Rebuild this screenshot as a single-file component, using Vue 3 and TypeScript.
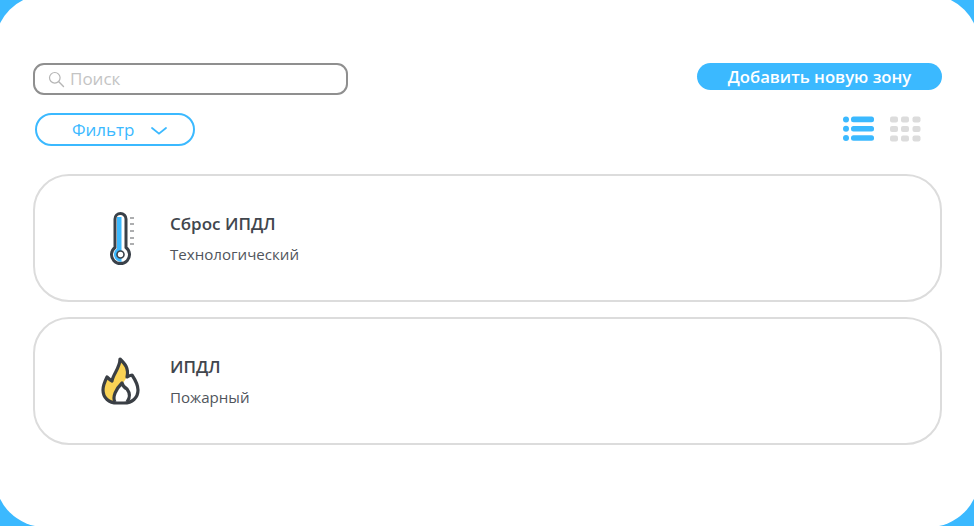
<script setup lang="ts">
interface Zone {
  id: number;
  name: string;
  kind: string;
  icon: "thermo" | "fire";
}

const zones: Zone[] = [
  { id: 1, name: "Сброс ИПДЛ", kind: "Технологический", icon: "thermo" },
  { id: 2, name: "ИПДЛ", kind: "Пожарный", icon: "fire" },
];

const ticks = [8, 14, 21, 28, 34];
const listRows = [3.4, 12.7, 22];
const gridCols = [0, 11, 22.5];
const gridRows = [0.5, 10, 19.5];
</script>

<template>
  <div class="page">
    <div class="panel">
      <div class="toolbar">
        <div class="toolbar-left">
          <label class="search">
            <svg width="17" height="17" viewBox="0 0 17 17">
              <circle cx="6.8" cy="6.8" r="5.3" fill="none" stroke="#b5b5b5" stroke-width="1.2" />
              <path d="M10.8 10.8L15.5 15.5" stroke="#b5b5b5" stroke-width="1.4" stroke-linecap="round" />
            </svg>
            <span class="search-placeholder">Поиск</span>
          </label>
          <button class="filter">
            <span>Фильтр</span>
            <svg class="chevron" width="16" height="8" viewBox="0 0 16 8">
              <path d="M1 1L8 6.6L15 1" fill="none" stroke="#3bb9ff" stroke-width="1.8" stroke-linecap="round" />
            </svg>
          </button>
        </div>
        <div class="toolbar-right">
          <button class="add">Добавить новую зону</button>
          <div class="views">
            <svg width="31" height="26" viewBox="0 0 31 26">
              <g v-for="y in listRows" :key="y" fill="#3bb9ff">
                <circle cx="3" :cy="y" r="3" />
                <rect x="8" :y="y - 2.8" width="23" height="5.6" rx="2.5" />
              </g>
            </svg>
            <svg width="31" height="26" viewBox="0 0 31 26">
              <g v-for="x in gridCols" :key="x" fill="#dcdcdc">
                <rect v-for="y in gridRows" :key="y" :x="x" :y="y" width="8" height="6" rx="2" />
              </g>
            </svg>
          </div>
        </div>
      </div>

      <div class="cards">
        <div v-for="zone in zones" :key="zone.id" class="card">
          <div class="card-icon">
            <svg v-if="zone.icon === 'thermo'" width="28" height="56" viewBox="-1 0 28 56">
              <path d="M7 9a5.500 5.500 0 0 1 11 0v28.500a9 9 0 1 1-11 0z" fill="#fff" />
              <path d="M9 7h4.500v45a7.500 7.500 0 0 1-4.500-13.500z" fill="#3bb9ff" />
              <path
                d="M7 9a5.500 5.500 0 0 1 11 0v28.500a9 9 0 1 1-11 0z"
                fill="none"
                stroke="#3a4149"
                stroke-width="3"
              />
              <circle cx="12.500" cy="44.500" r="3.500" fill="#fff" stroke="#3a4149" stroke-width="1.600" />
              <g stroke="#77797c" stroke-width="1.200">
                <path v-for="t in ticks" :key="t" :d="`M22 ${t}h4`" />
              </g>
            </svg>
            <svg v-else width="46" height="54" viewBox="-1 0 46 54">
              <path
                d="M21 5C26 10 30 14 28 23C30 22 32 21 33 21C37 27 39 31 39 36C39 44 33 49 25 49H18C10 49 4 44 4 36C4 31 6 27 8 23C10 25 11 26 13 27C14 20 21 14 21 5Z"
                fill="#fff"
              />
              <path
                d="M21 5C26 10 30 14 28 23L24 29C17 35 13 43 16 48C10 47 4 43 4 36C4 31 6 27 8 23C10 25 11 26 13 27C14 20 21 14 21 5Z"
                fill="#fad355"
              />
              <path
                d="M21 5C26 10 30 14 28 23C30 22 32 21 33 21C37 27 39 31 39 36C39 44 33 49 25 49H18C10 49 4 44 4 36C4 31 6 27 8 23C10 25 11 26 13 27C14 20 21 14 21 5Z"
                fill="none"
                stroke="#3a3f45"
                stroke-width="3.200"
                stroke-linejoin="round"
              />
              <path
                d="M16 48C13 43 17 35 23 29C24 33 26 34 28 35C31 39 31 44 28 48"
                fill="none"
                stroke="#3a3f45"
                stroke-width="3.200"
                stroke-linejoin="round"
              />
            </svg>
          </div>
          <div class="card-text">
            <div class="card-name">{{ zone.name }}</div>
            <div class="card-kind">{{ zone.kind }}</div>
          </div>
        </div>
      </div>
    </div>
  </div>
</template>

<style>
html,
body {
  margin: 0;
}
</style>

<style scoped>
.page {
  width: 974px;
  height: 526px;
  background: #3bb9ff;
  overflow: hidden;
}

.panel {
  box-sizing: border-box;
  width: 984px;
  height: 532px;
  margin: -5px 0 0 -5px;
  padding: 68px 37px 0 38px;
  background: #fff;
  border-radius: 50px;
  font-family: "Open Sans", "Noto Sans", sans-serif;
}

.toolbar {
  display: flex;
  justify-content: space-between;
}

.toolbar-left {
  display: flex;
  flex-direction: column;
  align-items: flex-start;
  gap: 18px;
}

.search {
  box-sizing: border-box;
  display: flex;
  align-items: center;
  gap: 5px;
  width: 315px;
  height: 32px;
  padding-left: 13px;
  border: 2px solid #8f8f8f;
  border-radius: 11px;
}

.search-placeholder {
  margin-top: -2px;
  color: #c4c4c4;
  font-size: 17px;
}

.filter {
  box-sizing: border-box;
  display: flex;
  align-items: center;
  gap: 16px;
  width: 160px;
  height: 33px;
  margin-left: 2px;
  padding: 0 0 0 35px;
  background: #fff;
  border: 2px solid #3bb9ff;
  border-radius: 17px;
  color: #3bb9ff;
  font-family: inherit;
  font-size: 17px;
}

.chevron {
  margin-top: 3px;
}

.toolbar-right {
  display: flex;
  flex-direction: column;
  align-items: flex-end;
  gap: 26px;
}

.add {
  width: 245px;
  height: 27px;
  padding: 0;
  background: #3bb9ff;
  border: none;
  border-radius: 14px;
  color: #fff;
  font-family: inherit;
  font-size: 16.7px;
  font-weight: 600;
}

.views {
  display: flex;
  gap: 16px;
  margin-right: 21px;
}

.cards {
  display: flex;
  flex-direction: column;
  gap: 15px;
  margin-top: 28px;
}

.card {
  box-sizing: border-box;
  display: flex;
  align-items: center;
  height: 128px;
  border: 2px solid #dcdcdc;
  border-radius: 36px;
}

.card-icon {
  display: flex;
  justify-content: center;
  width: 46px;
  margin-left: 63px;
  margin-right: 26px;
}

.card-text {
  padding-top: 1px;
}

.card-name {
  color: #41464d;
  font-size: 17px;
  font-weight: 600;
  line-height: 22px;
}

.card-kind {
  margin-top: 9px;
  color: #50555c;
  font-size: 15.1px;
  line-height: 20px;
}
</style>
